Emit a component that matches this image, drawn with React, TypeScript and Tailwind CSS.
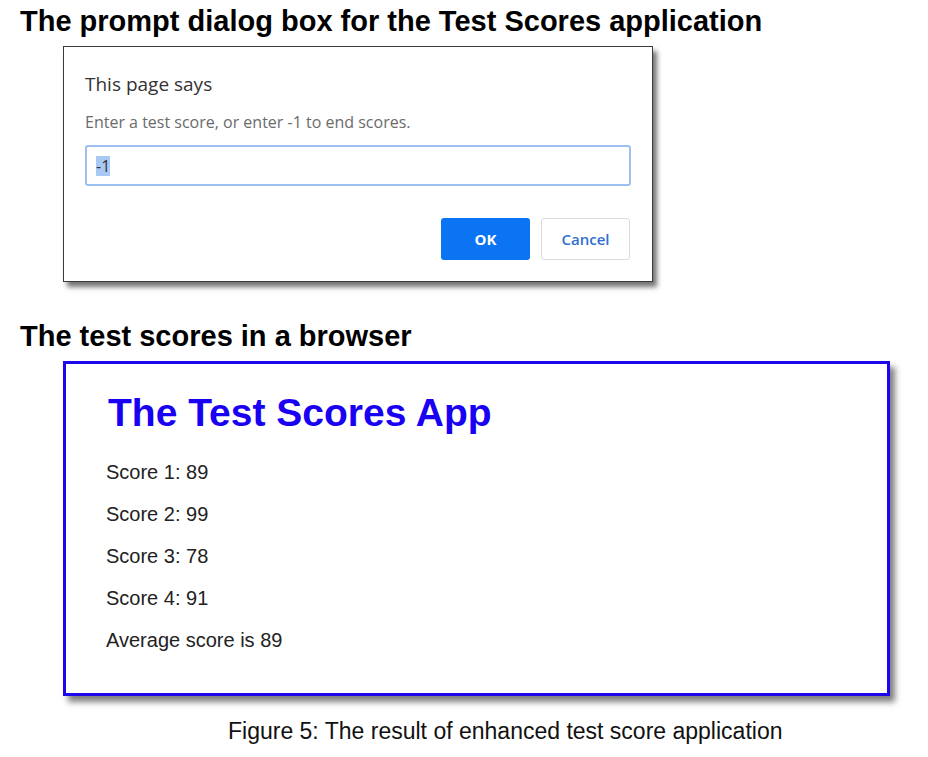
import React from "react";

const scores = [89, 99, 78, 91];

function PromptDialog() {
  return (
    <div className="ml-[63px] mt-[8px] h-[236px] w-[590px] border border-[#3a3a3a] bg-white px-[21px] shadow-[4px_5px_5px_rgba(0,0,0,0.55)] font-['Open_Sans',sans-serif]">
      <p className="pt-[25px] text-[19px] leading-[24px] text-[#333]">This page says</p>
      <p className="mt-[16px] text-[16px] leading-[20px] text-[#6b6b6b]">Enter a test score, or enter -1 to end scores.</p>
      <div className="mt-[13px] flex h-[41px] items-center rounded-[3px] border-2 border-[#9cc0f0] px-[9px]">
        <span className="bg-[#a9c9f5] text-[16px] leading-[20px] text-[#333]">-1</span>
      </div>
      <div className="mt-[32px] flex justify-end gap-[11px] pr-[1px]">
        <div className="flex h-[42px] w-[89px] items-center justify-center rounded-[3px] bg-[#0a74f2] text-[15px] font-bold text-white">OK</div>
        <div className="flex h-[42px] w-[89px] items-center justify-center rounded-[3px] border border-[#dcdcdc] text-[15px] font-semibold text-[#2f6fd1]">Cancel</div>
      </div>
    </div>
  );
}

function ScoresBox() {
  return (
    <div className="ml-[63px] mt-[8px] h-[335px] w-[827px] border-[3px] border-[#1d05ec] bg-white pl-[40px] shadow-[5px_6px_6px_rgba(0,0,0,0.5)] font-['Liberation_Sans',Arial,sans-serif]">
      <h2 className="ml-[2px] pt-[27px] text-[39px] font-bold leading-[44px] text-[#1a00f2]">The Test Scores App</h2>
      <div className="mt-[26px] flex flex-col gap-[19px]">
        {scores.map((s, i) => (
          <p key={i} className="text-[20px] leading-[23px] text-[#222]">Score {i + 1}: {s}</p>
        ))}
        <p className="text-[20px] leading-[23px] text-[#222]">Average score is 89</p>
      </div>
    </div>
  );
}

export default function App() {
  return (
    <div className="h-[757px] w-[928px] overflow-hidden bg-white font-['Liberation_Sans',Arial,sans-serif] text-black">
      <h1 className="pl-[20px] pt-[4px] text-[29px] font-bold leading-[34px]">The prompt dialog box for the Test Scores application</h1>
      <PromptDialog />
      <h1 className="mt-[37px] pl-[20px] text-[29px] font-bold leading-[34px]">The test scores in a browser</h1>
      <ScoresBox />
      <p className="mt-[21px] pl-[228px] text-[23px] leading-[28px] text-[#111]">Figure 5: The result of enhanced test score application</p>
    </div>
  );
}
